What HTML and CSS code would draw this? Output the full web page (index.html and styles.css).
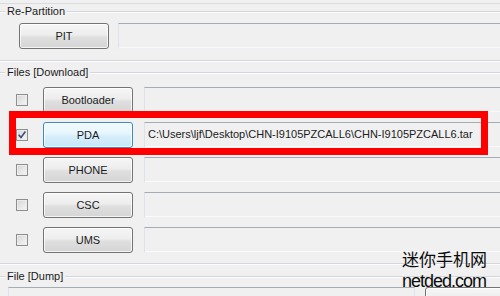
FILE: index.html
```html
<!DOCTYPE html>
<html>
<head>
<meta charset="utf-8">
<link rel="stylesheet" href="styles.css">
</head>
<body>
<div class="window">
  <div class="rule-top"></div>

  <div class="group repart">
    <div class="group-head"><span>Re-Partition</span></div>
    <div class="row pit-row">
      <button class="btn">PIT</button>
      <div class="field"></div>
    </div>
  </div>

  <div class="group files">
    <div class="group-head"><span>Files [Download]</span></div>
    <div class="rows">
      <div class="row file-row">
        <span class="check"></span>
        <button class="btn">Bootloader</button>
        <div class="field"></div>
      </div>
      <div class="row file-row">
        <span class="check checked">
          <svg width="10" height="10" viewBox="0 0 10 10"><path d="M1.6 4.8 L4 7.4 L8.4 1.6" fill="none" stroke="#3d4f78" stroke-width="1.6"/></svg>
        </span>
        <button class="btn focus">PDA</button>
        <div class="field">C:\Users\ljf\Desktop\CHN-I9105PZCALL6\CHN-I9105PZCALL6.tar</div>
      </div>
      <div class="row file-row">
        <span class="check"></span>
        <button class="btn">PHONE</button>
        <div class="field"></div>
      </div>
      <div class="row file-row">
        <span class="check"></span>
        <button class="btn">CSC</button>
        <div class="field"></div>
      </div>
      <div class="row file-row">
        <span class="check"></span>
        <button class="btn">UMS</button>
        <div class="field"></div>
      </div>
    </div>
  </div>

  <div class="group dump">
    <div class="group-head"><span>File [Dump]</span></div>
    <div class="row dump-row">
      <div class="field dump-field"></div>
      <button class="btn dump-btn"></button>
    </div>
  </div>

  <!-- annotation drawn over the screenshot -->
  <div class="mark"></div>

  <div class="watermark">
    <div class="wm-cn">迷你手机网</div>
    <div class="wm-en">netded.com</div>
  </div>
</div>
</body>
</html>
```

FILE: styles.css
```css
html, body {
    margin: 0;
    height: 100%;
    overflow: hidden;
}
body {
    background: #f0f0f0;
    font-family: "Liberation Sans", Arial, sans-serif;
    font-size: 11px;
    color: #1b1b1b;
}
.window {
    position: relative;
    width: 500px;
    height: 296px;
    overflow: hidden;
}
.rule-top {
    height: 3px;
    border-bottom: 1px solid #d9dbde;
}

/* group boxes */
.group {
    border-bottom: 1px solid #d3d7db;
    box-shadow: 0 1px 0 #fdfdfd;
}
.group-head {
    display: flex;
    align-items: center;
    height: 13px;
    line-height: 13px;
}
.group-head::before,
.group-head::after {
    content: "";
    height: 1px;
    background: #d3d7db;
    box-shadow: 0 1px 0 #fdfdfd;
}
.group-head::before {
    width: 5px;
}
.group-head::after {
    flex: 1;
}
.group-head span {
    padding: 0 2px;
    white-space: nowrap;
}
.repart {
    padding: 1px 0 11px;
}
.files {
    padding: 5px 0 10px;
}
.dump {
    padding-top: 6px;
    border-bottom: 0;
    box-shadow: none;
}

/* rows */
.row {
    display: flex;
    align-items: center;
    height: 26px;
}
.pit-row {
    margin-top: 5px;
    padding-left: 19px;
    gap: 9px;
}
.rows {
    display: flex;
    flex-direction: column;
    gap: 9px;
    margin-top: 8px;
}
.file-row {
    padding-left: 16px;
}
.file-row .btn {
    margin-left: 15px;
}
.file-row .field {
    margin-left: 11px;
}
.dump-row {
    margin-top: 4px;
    padding-left: 8px;
    gap: 10px;
    align-items: flex-start;
}

/* controls */
.btn {
    width: 90px;
    height: 26px;
    flex: none;
    box-sizing: border-box;
    padding: 0;
    border: 1px solid #747474;
    border-radius: 3px;
    background: linear-gradient(#f6f6f6, #ededed 45%, #dfdfdf 55%, #d5d5d5);
    box-shadow: inset 0 0 0 1px rgba(255, 255, 255, 0.75);
    font: inherit;
    color: #1b1b1b;
}
.btn.focus {
    border-color: #3c8bbd;
    background: linear-gradient(#f3fafe, #e6f5fd 45%, #d6eefb 55%, #c9e7f8);
}
.field {
    flex: 1;
    height: 26px;
    margin-right: -40px;
    box-sizing: border-box;
    padding: 5px 3px 0;
    border: 1px solid #dfe3e9;
    border-top-color: #a4acb6;
    border-bottom-color: #eef1f4;
    background: #f0f0f0;
    box-shadow: inset 0 -1px 0 #fafafa;
    white-space: nowrap;
    overflow: hidden;
}
.dump-field {
    flex: none;
    width: 407px;
    margin-right: 0;
}
.dump-btn {
    width: 100px;
    margin-right: -40px;
}
.check {
    width: 12px;
    height: 12px;
    flex: none;
    box-sizing: border-box;
    border: 1px solid #8e8f8f;
    background: linear-gradient(135deg, #d5d5d5, #f7f7f7);
    box-shadow: inset 0 0 0 1px #ececec;
    display: flex;
    align-items: center;
    justify-content: center;
}

/* red annotation box */
.mark {
    position: absolute;
    left: 9px;
    top: 111px;
    width: 479px;
    height: 44px;
    box-sizing: border-box;
    border: 7px solid #ff0000;
}

.watermark {
    position: absolute;
    left: 402px;
    top: 249px;
    color: #0c0c0c;
}
.wm-cn {
    font-family: "Noto Sans CJK SC", sans-serif;
    font-size: 17px;
    line-height: 20px;
}
.wm-en {
    margin-top: 3px;
    font-size: 18px;
    line-height: 18px;
    letter-spacing: -1px;
}
```
